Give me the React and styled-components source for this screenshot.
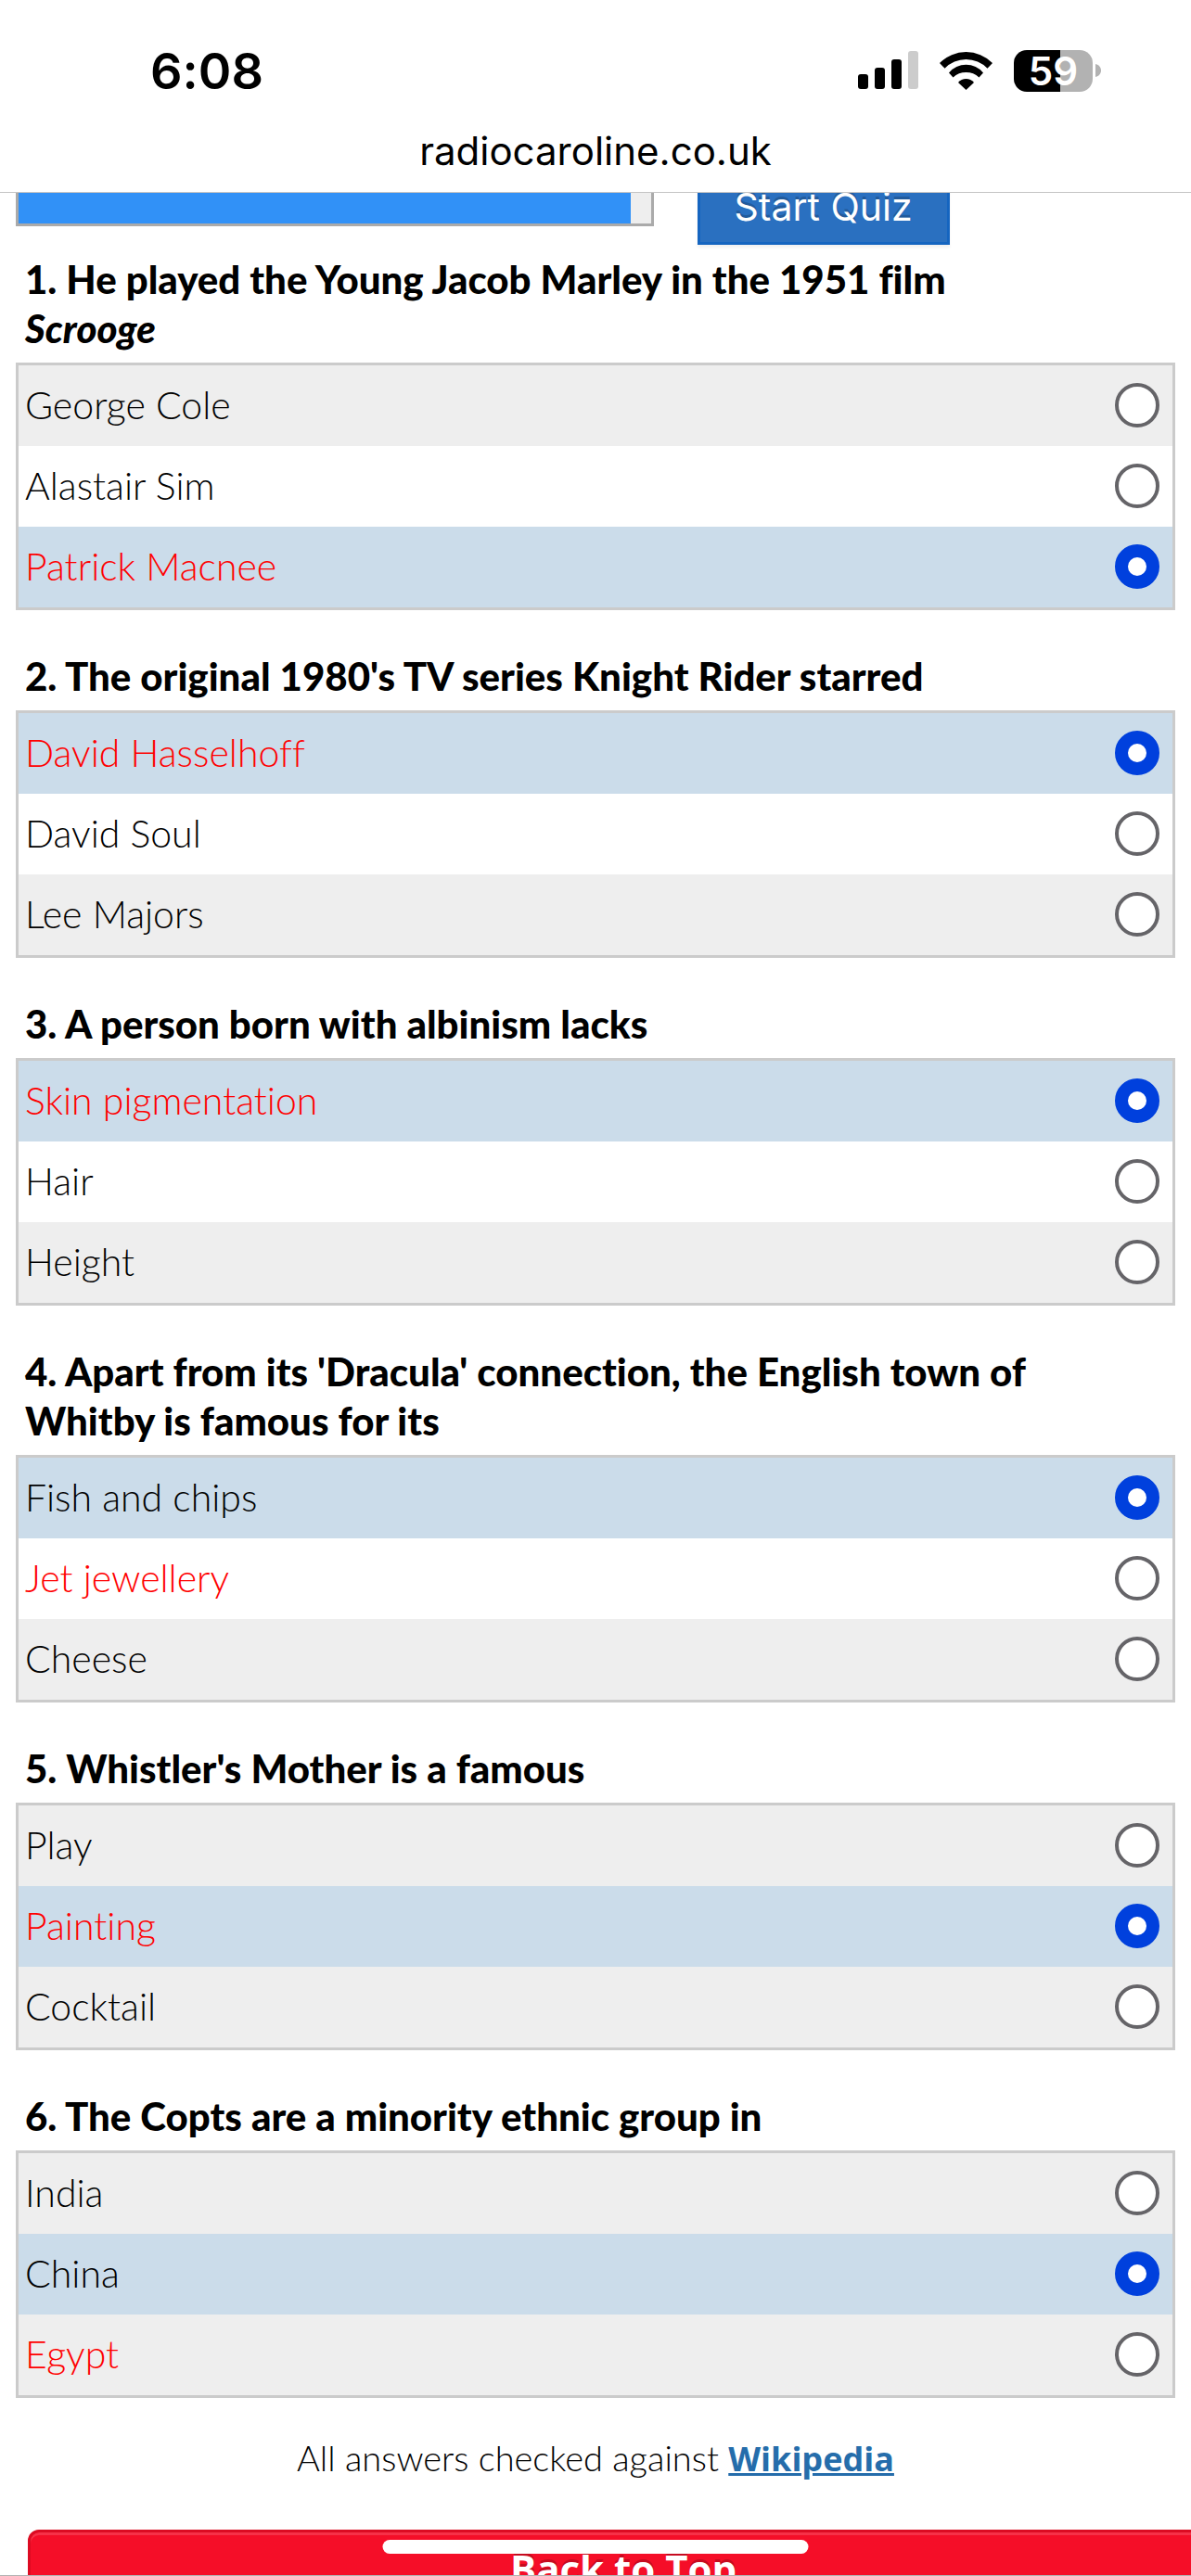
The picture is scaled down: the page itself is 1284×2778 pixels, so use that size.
import React, { useState } from "react";
import styled, { createGlobalStyle } from "styled-components";

const GlobalStyle = createGlobalStyle`
  * {
    box-sizing: border-box;
  }

  body {
    margin: 0;
    background-color: #fff;
    color: #000;
    font-family: Lato, "Open Sans", sans-serif;
    font-variant-ligatures: none;
  }
`;

const Shell = styled.div`
  position: relative;
  display: flex;
  flex-direction: column;
  height: 100vh;
  overflow: hidden;
  border-bottom: 1px solid #b3b3b3;
`;

const Header = styled.header`
  position: relative;
  z-index: 1;
  flex-shrink: 0;
  background-color: #fff;
  border-bottom: 1px solid #c4c4c4;
  font-family: Inter, sans-serif;
`;

const StatusBar = styled.div`
  display: flex;
  justify-content: space-between;
  align-items: center;
  height: 128px;
  padding: 24px 97px 0 162px;
`;

const Clock = styled.time`
  padding-top: 2px;
  font-size: 54px;
  font-weight: 600;
  line-height: 64px;
`;

const StatusIcons = styled.div`
  display: flex;
  align-items: center;
  gap: 23px;

  svg {
    display: block;
  }
`;

const Battery = styled.div`
  display: flex;
  align-items: center;
  gap: 3px;
`;

const BatteryBody = styled.div`
  width: 85px;
  height: 45px;
  border-radius: 14px;
  background: linear-gradient(to right, #000 59%, #b2b2b2 59%);
  color: #fff;
  font-size: 42px;
  font-weight: 600;
  line-height: 45px;
  text-align: center;
`;

const Address = styled.div`
  height: 79px;
  font-size: 42px;
  line-height: 70px;
  text-align: center;
`;

const Page = styled.main`
  flex: 1;
  min-height: 0;
  overflow: hidden;
  padding: 0 17px;
`;

const Toolbar = styled.div`
  display: flex;
  align-items: center;
  gap: 47px;
  margin-top: -27px;
  margin-bottom: 8px;
`;

const Progress = styled.progress`
  appearance: none;
  width: 55%;
  height: 42px;
  border: 3px solid #aaa;
  background-color: #eee;

  &::-webkit-progress-bar {
    background-color: #eee;
  }

  &::-webkit-progress-value {
    background-color: #3191f7;
  }
`;

const StartButton = styled.button`
  height: 83px;
  padding: 0 37px;
  border: 3px solid #1565c0;
  background-color: #2a70c0;
  box-shadow: 0 3px 3px rgba(0, 0, 0, 0.06);
  color: #fff;
  font-family: Inter, sans-serif;
  font-size: 41px;
  text-shadow: 0 -3px 0 rgba(0, 0, 0, 0.2);
`;

const Question = styled.section`
  padding-bottom: 42px;
`;

const QuestionTitle = styled.h2`
  margin: 0;
  padding: 3px 110px 10px 10px;
  font-size: 42px;
  font-weight: 900;
  line-height: 53px;
`;

const Answers = styled.div`
  border: 3px solid #cbcbcb;
`;

const Answer = styled.label`
  display: flex;
  justify-content: space-between;
  align-items: center;
  height: 87px;
  padding: 0 14px 2px 7px;
  font-size: 41px;
  font-weight: 300;
  line-height: 54px;
  color: ${(props) => (props.$correct ? "#f00" : "#000")};

  &:nth-child(odd) {
    background-color: #eee;
  }

  &:has(input:checked) {
    background-color: #cbdcea;
  }
`;

const Radio = styled.input`
  appearance: none;
  width: 48px;
  height: 48px;
  margin: 0;
  border: 4px solid #656468;
  border-radius: 50%;
  background-color: #fff;

  &:checked {
    border: 14px solid #0040dd;
  }
`;

const Footnote = styled.p`
  margin: 0;
  font-size: 38px;
  font-weight: 300;
  line-height: 44px;
  text-align: center;
`;

const WikiLink = styled.a`
  color: #256dab;
  font-family: "Open Sans", sans-serif;
  font-size: 36px;
  font-weight: 700;
  text-decoration-thickness: 3px;
`;

const BackToTop = styled.button`
  display: block;
  width: 100vw;
  height: 83px;
  margin: 54px 0 0 13px;
  border: 3px solid #dc0b22;
  border-radius: 12px;
  background-color: #f50e28;
  box-shadow: inset 0 3px 0 rgba(255, 255, 255, 0.15);
  color: #fff;
  font-family: "Open Sans", sans-serif;
  font-size: 42px;
  font-weight: 700;
  line-height: 54px;
  padding: 0;
  text-shadow: 0 -3px 0 rgba(0, 0, 0, 0.2);
`;

const HomeIndicator = styled.div`
  position: absolute;
  bottom: 23px;
  left: 50%;
  width: 459px;
  height: 15px;
  border-radius: 8px;
  background-color: #fff;
  transform: translateX(-50%);
`;

const questions = [
  {
    title: (
      <>
        He played the Young Jacob Marley in the 1951 film <em>Scrooge</em>
      </>
    ),
    answers: ["George Cole", "Alastair Sim", "Patrick Macnee"],
    correct: 2,
    picked: 2,
  },
  {
    title: "The original 1980's TV series Knight Rider starred",
    answers: ["David Hasselhoff", "David Soul", "Lee Majors"],
    correct: 0,
    picked: 0,
  },
  {
    title: "A person born with albinism lacks",
    answers: ["Skin pigmentation", "Hair", "Height"],
    correct: 0,
    picked: 0,
  },
  {
    title:
      "Apart from its 'Dracula' connection, the English town of Whitby is famous for its",
    answers: ["Fish and chips", "Jet jewellery", "Cheese"],
    correct: 1,
    picked: 0,
  },
  {
    title: "Whistler's Mother is a famous",
    answers: ["Play", "Painting", "Cocktail"],
    correct: 1,
    picked: 1,
  },
  {
    title: "The Copts are a minority ethnic group in",
    answers: ["India", "China", "Egypt"],
    correct: 2,
    picked: 1,
  },
];

const SignalIcon = () => (
  <svg width="65" height="42" viewBox="0 0 65 42">
    <rect x="0" y="25" width="11" height="16" rx="3" />
    <rect x="18" y="18" width="11" height="23" rx="3" />
    <rect x="36" y="9" width="11" height="32" rx="3" />
    <rect x="54" y="0" width="11" height="41" rx="3" fill="#ccc" />
  </svg>
);

const WifiIcon = () => (
  <svg width="57" height="42" viewBox="0 0 57 42">
    <path d="M0 13A40 40 0 0 1 57 13L51.5 18.7A32 32 0 0 0 5.5 18.7Z" />
    <path d="M10 23.5A24 24 0 0 1 47 23.5L42.5 28.5A20.6 20.6 0 0 0 14.5 28.5Z" />
    <path d="M20 34A11 11 0 0 1 37 34L28.5 42Z" />
  </svg>
);

const App = () => {
  const [picks, setPicks] = useState(questions.map((q) => q.picked));

  const handlePick = (question, answer) => {
    setPicks(picks.map((pick, i) => (i === question ? answer : pick)));
  };

  return (
    <Shell>
      <GlobalStyle />
      <Header>
        <StatusBar>
          <Clock>6:08</Clock>
          <StatusIcons>
            <SignalIcon />
            <WifiIcon />
            <Battery>
              <BatteryBody>59</BatteryBody>
              <svg width="6" height="14" viewBox="0 0 6 14">
                <path d="M0 0C4 1 6 4 6 7S4 13 0 14Z" fill="#b2b2b2" />
              </svg>
            </Battery>
          </StatusIcons>
        </StatusBar>
        <Address>radiocaroline.co.uk</Address>
      </Header>
      <Page>
        <Toolbar>
          <Progress value="968" max="1000" aria-label="Quiz progress" />
          <StartButton type="button">Start Quiz</StartButton>
        </Toolbar>
        {questions.map((q, i) => (
          <Question key={i}>
            <QuestionTitle id={`question-${i}`}>
              {`${i + 1}. `}
              {q.title}
            </QuestionTitle>
            <Answers role="radiogroup" aria-labelledby={`question-${i}`}>
              {q.answers.map((answer, j) => (
                <Answer key={answer} $correct={q.correct === j}>
                  {answer}
                  <Radio
                    type="radio"
                    name={`question-${i}`}
                    checked={picks[i] === j}
                    onChange={() => handlePick(i, j)}
                  />
                </Answer>
              ))}
            </Answers>
          </Question>
        ))}
        <Footnote>
          All answers checked against{" "}
          <WikiLink href="https://en.wikipedia.org">Wikipedia</WikiLink>
        </Footnote>
        <BackToTop type="button">Back to Top</BackToTop>
      </Page>
      <HomeIndicator />
    </Shell>
  );
};

export default App;
